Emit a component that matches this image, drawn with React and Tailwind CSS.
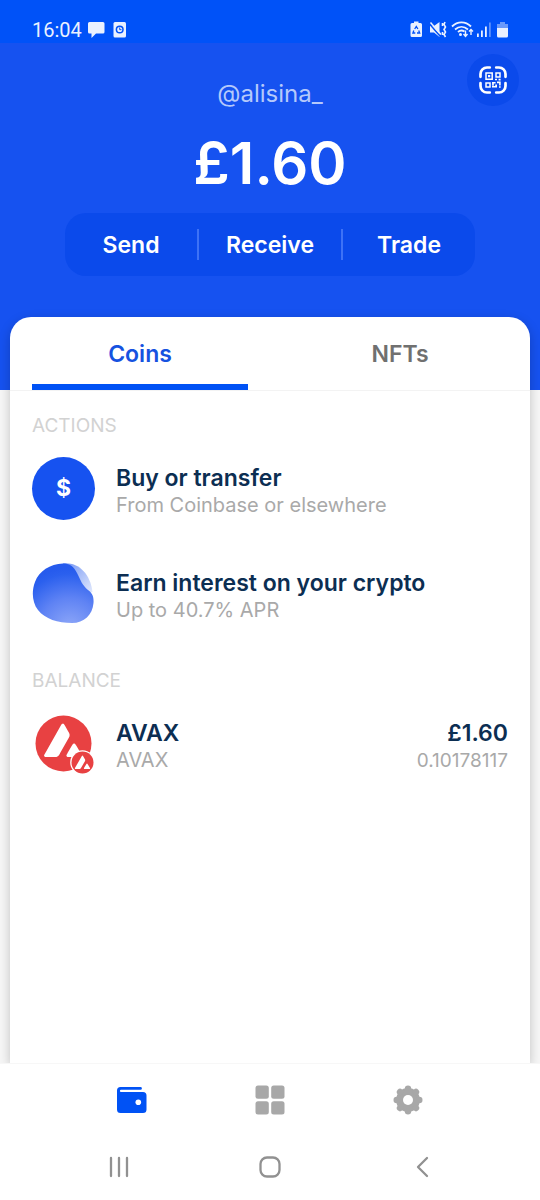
import React, { useState } from "react";

const AVAX_GLYPH =
  "M538.688 1050.86H392.94C362.314 1050.86 347.186 1050.86 337.962 1044.96C327.999 1038.5 321.911 1027.8 321.173 1015.99C320.619 1005.11 328.184 991.822 343.312 965.255L703.182 330.935C718.495 303.999 726.243 290.531 736.021 285.55C746.537 280.2 759.083 280.2 769.599 285.55C779.377 290.531 787.126 303.999 802.438 330.935L876.42 460.079L876.797 460.738C893.336 489.635 901.723 504.289 905.385 519.669C909.443 536.458 909.443 554.169 905.385 570.958C901.695 586.455 893.393 601.215 876.604 630.549L687.573 964.702L687.084 965.558C670.436 994.693 661.999 1009.46 650.306 1020.6C637.576 1032.78 622.263 1041.63 605.474 1046.62C590.161 1050.86 573.004 1050.86 538.688 1050.86ZM906.75 1050.86H1115.59C1146.4 1050.86 1161.9 1050.86 1171.13 1044.78C1181.09 1038.32 1187.36 1027.43 1187.92 1015.63C1188.45 1005.1 1181.05 992.33 1166.55 967.307L1165.04 964.706L1060.43 785.75L1059.24 783.735C1044.54 758.877 1037.12 746.324 1027.59 741.472C1017.08 736.121 1004.71 736.121 994.199 741.472C984.605 746.453 976.857 759.552 961.544 785.934L857.306 964.891L856.949 965.507C841.69 991.847 834.064 1005.01 834.614 1015.81C835.352 1027.62 841.44 1038.5 851.402 1044.96C860.443 1050.86 875.94 1050.86 906.75 1050.86Z";

function AvaxIcon() {
  return (
    <svg viewBox="0 0 63 63" className="size-[63px] shrink-0" aria-hidden="true">
      <circle cx="31.5" cy="31.5" r="28" fill="#e84142" />
      <path d={AVAX_GLYPH} fill="#fff" transform="translate(-1.9 -0.6) scale(0.0435)" />
      <circle cx="50.5" cy="50.5" r="12.3" fill="#fff" />
      <circle cx="50.5" cy="50.5" r="11" fill="#e84142" />
      <path d={AVAX_GLYPH} fill="#fff" transform="translate(37.2 38.6) scale(0.0176)" />
    </svg>
  );
}

function DollarIcon() {
  return (
    <span className="flex size-[63px] shrink-0 items-center justify-center rounded-full bg-[#1652f0] text-[23px] font-bold text-white">
      $
    </span>
  );
}

function BlobIcon() {
  return (
    <svg viewBox="0 0 63 63" className="size-[63px] shrink-0" aria-hidden="true">
      <defs>
        <radialGradient id="blobMain" gradientUnits="userSpaceOnUse" cx="38" cy="66" r="60">
          <stop offset="0" stopColor="#8fa8f8" />
          <stop offset="0.5" stopColor="#5f83f4" />
          <stop offset="0.9" stopColor="#2b60ee" />
          <stop offset="1" stopColor="#265bed" />
        </radialGradient>
        <linearGradient id="blobBack" x1="0" y1="0" x2="1" y2="1">
          <stop offset="0" stopColor="#6f92f4" />
          <stop offset="1" stopColor="#e8eefd" />
        </linearGradient>
      </defs>
      <path d="M31 1.5C46 0 58 11 60.5 30L50 34L30 10Z" fill="url(#blobBack)" />
      <path
        d="M31 1.5C38 1.2 42 5 45 11C49 19 50 23 56 28C60 31 62 34 61.5 41C60.5 53 52 61 40 61C26 61 13 57 6 48C0 40 -0.5 29 3 20C7 9 18 2 31 1.5Z"
        fill="url(#blobMain)"
      />
    </svg>
  );
}

function QrIcon() {
  return (
    <svg viewBox="0 0 28 28" className="size-7" fill="none" stroke="#fff" aria-hidden="true">
      <path
        d="M1.5 10.8V8A6.5 6.5 0 0 1 8 1.5H10.8M17.2 1.5H20A6.5 6.5 0 0 1 26.5 8V10.8M26.5 17.2V20A6.5 6.5 0 0 1 20 26.5H17.2M10.8 26.5H8A6.5 6.5 0 0 1 1.5 20V17.2"
        strokeWidth="2.7"
        strokeLinecap="round"
      />
      <path d="M7 7H13.2V13.2H7ZM17 7H21V11H17ZM7 17H11V21H7Z" strokeWidth="1.5" />
      <path
        d="M9 9h2.2v2.200H9ZM16 12.800h2v1.500h-2ZM19.600 12.800h2v1.600h-2ZM13 16h3.600v1.600h-1.800v2.200h-1.600ZM18 15.500h3.700v4.100h-1.600v-2.400H18ZM16.200 18.600h1.800v3h-5v-1.500h3.200ZM20 20.200h1.700v1.500H20Z"
        fill="#fff"
        stroke="none"
      />
    </svg>
  );
}

function StatusBar() {
  return (
    <div className="flex h-[43px] items-center justify-between bg-[#0052f8] px-8 pt-[17px] text-[#eaf1ff]">
      <div className="flex h-6 items-center gap-1.5">
        <time className="font-['Roboto',sans-serif] text-xl leading-6">16:04</time>
        <svg viewBox="0 0 44 20" className="h-5 w-11" fill="currentColor" aria-hidden="true">
          <path d="M1.5 2H15a1.5 1.5 0 0 1 1.500 1.500V12a1.500 1.500 0 0 1-1.500 1.500H8L3.500 18V13.500H1.500A1.500 1.500 0 0 1 0 12V3.500A1.500 1.500 0 0 1 1.500 2Z" />
          <rect x="25.500" y="2" width="12.500" height="15.500" rx="1.500" />
          <circle cx="31.700" cy="9.500" r="3.300" fill="none" stroke="#0052f8" strokeWidth="1.500" />
          <path d="M31.700 7.500V9.700H33.500" fill="none" stroke="#0052f8" strokeWidth="1" />
        </svg>
      </div>
      <svg viewBox="0 0 100 20" className="h-5 w-[100px]" fill="currentColor" aria-hidden="true">
        <path d="M6 1.500H10.500V3H12.500a1.500 1.500 0 0 1 1.500 1.500V15.500A1.500 1.500 0 0 1 12.500 17H4a1.500 1.500 0 0 1-1.500-1.500V4.500A1.500 1.500 0 0 1 4 3H6Z" />
        <path
          d="M6.700 9L8.300 6.500L9.900 9M10.700 10.500L11.700 13H9M7.300 13H4.900L5.800 10.500"
          fill="none"
          stroke="#0052f8"
          strokeWidth="1.300"
        />
        <path d="M22 6H26L31.500 2V17L26 12.500H22Z" />
        <path d="M22 4.500L32 16" stroke="#0052f8" strokeWidth="1.500" />
        <path d="M22.500 2.500L33 14.500" stroke="currentColor" strokeWidth="1.500" />
        <path
          d="M34.500 3V6M34.500 12V15M37 2L36 4.500L37.500 7L36 9.500L37.500 12L36 14.500L37.500 17"
          fill="none"
          stroke="currentColor"
          strokeWidth="1.600"
        />
        <g fill="none" stroke="currentColor" strokeWidth="1.800">
          <path d="M44 6.500C49.500 1 57.500 1 63 6.500M47 9.500C51 6 56 6 60 9.500M50 12C52 10.200 54.500 10.200 56.500 11.500" />
          <path d="M57.500 10.500V16M55.500 14L57.500 16.500L59.500 14M63 15V9.500M61 11.500L63 9.500L65 11.500" strokeWidth="1.400" />
        </g>
        <circle cx="52.500" cy="14.500" r="1.500" />
        <path d="M69 13.500H70.800V17H69ZM73 10.500H74.800V17H73ZM77 6.500H78.800V17H77Z" />
        <path d="M81 2.500H82.800V17H81Z" opacity="0.400" />
        <path d="M92 2H97V4H100V8H89V4H92Z" opacity="0.450" />
        <path d="M89 8H100V16A1.500 1.500 0 0 1 98.500 17.500H90.500A1.500 1.500 0 0 1 89 16Z" />
      </svg>
    </div>
  );
}

function AssetRow({ icon, title, subtitle, value, amount }) {
  return (
    <button type="button" className="flex w-full items-start gap-[21px] text-left">
      {icon}
      <span className="flex min-w-0 flex-1 flex-col pt-2">
        <span className="text-[23px] leading-[27px] font-semibold text-[#0c2e52]">{title}</span>
        <span className="text-[20px] leading-[27px] text-[#a9a9a9]">{subtitle}</span>
      </span>
      {value && (
        <span className="flex flex-col pt-2 text-right">
          <span className="text-[23px] leading-[27px] font-semibold text-[#0c2e52]">{value}</span>
          <span className="text-[19px] leading-[27px] text-[#a9a9a9]">{amount}</span>
        </span>
      )}
    </button>
  );
}

function Tab({ label, active, onClick }) {
  return (
    <button
      type="button"
      role="tab"
      aria-selected={active}
      onClick={onClick}
      className={
        active
          ? "flex flex-1 flex-col px-[22px] text-[23px] font-semibold text-[#1652e0]"
          : "flex flex-1 flex-col px-[22px] text-[23px] font-semibold text-[#707070]"
      }
    >
      <span className="flex h-[67px] w-full items-center justify-center pt-2">{label}</span>
      <span className={active ? "h-1.5 w-full bg-[#0052f5]" : "h-1.5 w-full"} />
    </button>
  );
}

const LOBES = [0, 45, 90, 135, 180, 225, 270, 315];

export default function App() {
  const [tab, setTab] = useState("Coins");
  return (
    <div className="flex min-h-screen flex-col bg-[#f7f7f7] font-['Inter',sans-serif]">
      <header className="bg-[#1652f0] pb-[114px] text-white">
        <StatusBar />
        <div className="mt-[11px] grid grid-cols-[1fr_auto_1fr] px-[21px]">
          <p className="col-start-2 self-end text-2xl leading-6 text-[#b5c9fb]">@alisina_</p>
          <button
            type="button"
            aria-label="Scan code"
            className="flex size-[52px] items-center justify-center justify-self-end rounded-full bg-[#0b4aeb]"
          >
            <QrIcon />
          </button>
        </div>
        <h1 className="mt-[25px] text-center text-[58px] leading-16 font-semibold">£1.60</h1>
        <div className="mx-[65px] mt-[18px] flex h-[63px] items-center rounded-[21px] bg-[#0b4aeb] text-[23px] font-semibold">
          <button type="button" className="h-full flex-1 pt-0.5">Send</button>
          <span className="h-[31px] w-0.5 bg-[#3e72f6]" />
          <button type="button" className="h-full px-[27px] pt-0.5">Receive</button>
          <span className="h-[31px] w-0.5 bg-[#3e72f6]" />
          <button type="button" className="h-full flex-1 pt-0.5">Trade</button>
        </div>
      </header>

      <main className="relative mx-2.5 -mt-[73px] flex-1 rounded-t-[21px] bg-white shadow-[0_4px_12px_rgba(0,0,0,0.22)]">
        <div role="tablist" className="flex border-b border-[#f3f3f3]">
          {["Coins", "NFTs"].map((name) => (
            <Tab key={name} label={name} active={tab === name} onClick={() => setTab(name)} />
          ))}
        </div>
        <div className="px-[22px] pt-[23px]">
          <h2 className="text-[19px] leading-6 text-[#d2d2d2]">ACTIONS</h2>
          <div className="mt-[19px] flex flex-col gap-[42px]">
            <AssetRow icon={<DollarIcon />} title="Buy or transfer" subtitle="From Coinbase or elsewhere" />
            <AssetRow icon={<BlobIcon />} title="Earn interest on your crypto" subtitle="Up to 40.7% APR" />
          </div>
          <h2 className="mt-11 text-[19px] leading-6 text-[#d2d2d2]">BALANCE</h2>
          <div className="mt-[19px]">
            <AssetRow icon={<AvaxIcon />} title="AVAX" subtitle="AVAX" value="£1.60" amount="0.10178117" />
          </div>
        </div>
      </main>

      <footer className="relative border-t border-[#f7f7f7] bg-white">
        <nav className="grid h-[72px] grid-cols-3 items-center px-[63px]">
          <button type="button" aria-label="Wallet" className="flex justify-center">
            <svg viewBox="0 0 30 30" className="size-[30px]" aria-hidden="true">
              <path
                d="M3.500 2H23.500A1.400 1.400 0 0 1 23.500 4.800H4A1.100 1.100 0 0 0 4 7H26A3.500 3.500 0 0 1 29.500 10.500V24.500A3.500 3.500 0 0 1 26 28H3.500A3.500 3.500 0 0 1 0 24.500V5.500A3.500 3.500 0 0 1 3.500 2Z"
                fill="#0052f5"
              />
              <circle cx="21.300" cy="17.300" r="2.800" fill="#fff" />
            </svg>
          </button>
          <button type="button" aria-label="Apps" className="flex justify-center">
            <svg viewBox="0 0 30 30" className="size-[30px]" fill="#a8a8a8" aria-hidden="true">
              <rect x="0.500" y="0.500" width="13.300" height="13.300" rx="2.500" />
              <rect x="16.200" y="0.500" width="13.300" height="13.300" rx="2.500" />
              <rect x="0.500" y="16.200" width="13.300" height="13.300" rx="2.500" />
              <rect x="16.200" y="16.200" width="13.300" height="13.300" rx="2.500" />
            </svg>
          </button>
          <button type="button" aria-label="Settings" className="flex justify-center">
            <svg viewBox="0 0 30 30" className="size-[30px]" fill="#a8a8a8" aria-hidden="true">
              <circle cx="15" cy="15" r="11.900" />
              {LOBES.map((a) => (
                <circle key={a} cx="15" cy="3.700" r="3.200" transform={`rotate(${a} 15 15)`} />
              ))}
              <circle cx="15" cy="15" r="5" fill="#fff" />
            </svg>
          </button>
        </nav>
        <div className="grid h-[64px] grid-cols-3 items-start px-[42px] pt-[19px]">
          <button type="button" aria-label="Recent apps" className="flex justify-center">
            <svg viewBox="0 0 24 24" className="size-6" fill="none" stroke="#919191" strokeWidth="2.300" strokeLinecap="round" aria-hidden="true">
              <path d="M5 3V21M13 3V21M21 3V21" />
            </svg>
          </button>
          <button type="button" aria-label="Home" className="flex justify-center">
            <svg viewBox="0 0 24 24" className="size-6" fill="none" stroke="#919191" strokeWidth="2.300" aria-hidden="true">
              <rect x="2.500" y="2.500" width="19" height="19" rx="6.500" />
            </svg>
          </button>
          <button type="button" aria-label="Back" className="flex justify-center">
            <svg viewBox="0 0 24 24" className="size-6" fill="none" stroke="#919191" strokeWidth="2.300" strokeLinecap="round" strokeLinejoin="round" aria-hidden="true">
              <path d="M17 3L8 12L17 21" />
            </svg>
          </button>
        </div>
      </footer>
    </div>
  );
}
